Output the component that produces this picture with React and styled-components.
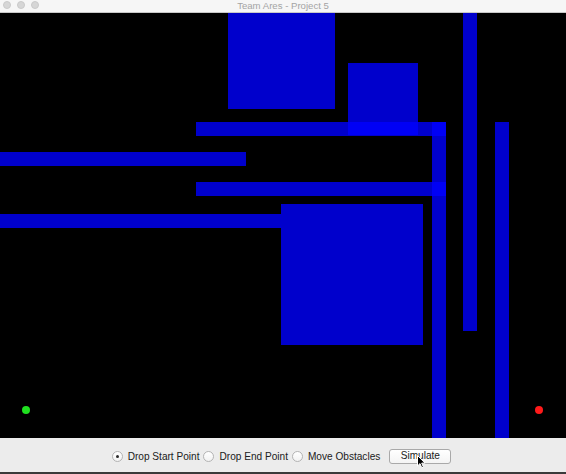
import React from "react";
import styled, { createGlobalStyle } from "styled-components";

const Global = createGlobalStyle`
  html, body { margin: 0; padding: 0; background: #ececec; }
  body { font-family: "Liberation Sans", Arial, sans-serif; }
`;

const Window = styled.div`
  width: 566px;
  height: 474px;
  display: flex;
  flex-direction: column;
  overflow: hidden;
  background: #ececec;
`;

const TitleBar = styled.div`
  position: relative;
  height: 12px;
  flex: none;
  background: #f6f6f6;
  border-bottom: 1px solid #c8c8c8;
  display: flex;
  align-items: center;
  justify-content: center;
`;

const Lights = styled.div`
  position: absolute;
  left: 3px;
  top: 1px;
  display: flex;
  gap: 6px;
`;

const Light = styled.span`
  width: 8px;
  height: 8px;
  border-radius: 50%;
  background: #d6d6d6;
  border: 0.5px solid #cacaca;
  box-sizing: border-box;
`;

const Title = styled.span`
  font-size: 9.6px;
  color: #a4a4a4;
  line-height: 12px;
  margin-top: -1px;
`;

const Canvas = styled.div`
  position: relative;
  height: 425px;
  flex: none;
  background: #000;
  overflow: hidden;
`;

const Obstacle = styled.div`
  position: absolute;
  background: rgba(0, 0, 255, 0.8);
`;

const Dot = styled.div`
  position: absolute;
  width: 8px;
  height: 8px;
  border-radius: 50%;
  background: ${(p) => p.$color};
`;

const Panel = styled.div`
  flex: 1;
  background: #ececec;
  border-bottom: 2px solid #3a3a3a;
  display: flex;
  align-items: center;
  justify-content: center;
  padding-right: 3px;
  padding-top: 2px;
  position: relative;
`;

const Option = styled.label`
  display: flex;
  align-items: center;
  gap: 5px;
  margin-right: 4px;
  font-size: 10.1px;
  color: #202020;
`;

const Radio = styled.span`
  width: 11px;
  height: 11px;
  box-sizing: border-box;
  border-radius: 50%;
  border: 1px solid #b4b4b4;
  background: linear-gradient(#ffffff, #f2f2f2);
  display: flex;
  align-items: center;
  justify-content: center;
  &::after {
    content: "";
    width: 3px;
    height: 3px;
    border-radius: 50%;
    background: ${(p) => (p.$checked ? "#2a2a2a" : "transparent")};
  }
`;

const Button = styled.button`
  margin-left: 5px;
  width: 62px;
  height: 15px;
  padding: 0;
  box-sizing: border-box;
  border: 1px solid #a9a9a9;
  border-radius: 3px;
  background: linear-gradient(#ffffff, #f4f4f4);
  font-family: "Liberation Sans", Arial, sans-serif;
  font-size: 10.1px;
  color: #202020;
  line-height: 12px;
`;

const Cursor = styled.svg`
  position: absolute;
  left: 417px;
  top: 17px;
`;

const obstacles = [
  { x: 228, y: 0, w: 107, h: 96 },
  { x: 348, y: 50, w: 70, h: 72 },
  { x: 196, y: 109, w: 250, h: 14 },
  { x: 0, y: 139, w: 246, h: 14 },
  { x: 196, y: 169, w: 250, h: 14 },
  { x: 0, y: 201, w: 281, h: 14 },
  { x: 281, y: 191, w: 142, h: 141 },
  { x: 432, y: 109, w: 14, h: 316 },
  { x: 463, y: 0, w: 14, h: 318 },
  { x: 495, y: 109, w: 14, h: 316 },
];

export default function App() {
  return (
    <>
      <Global />
      <Window>
        <TitleBar>
          <Lights>
            <Light />
            <Light />
            <Light />
          </Lights>
          <Title>Team Ares - Project 5</Title>
        </TitleBar>
        <Canvas>
          {obstacles.map((o, i) => (
            <Obstacle
              key={i}
              style={{ left: o.x, top: o.y, width: o.w, height: o.h }}
            />
          ))}
          <Dot $color="#1fe01f" style={{ left: 22, top: 393 }} />
          <Dot $color="#ff1a1a" style={{ left: 534.5, top: 393 }} />
        </Canvas>
        <Panel>
          <Option>
            <Radio $checked />
            Drop Start Point
          </Option>
          <Option>
            <Radio />
            Drop End Point
          </Option>
          <Option>
            <Radio />
            Move Obstacles
          </Option>
          <Button>Simulate</Button>
          <Cursor width="9" height="14" viewBox="0 0 9 14">
            <path
              d="M0.5 0.5 L0.5 11 L3 8.6 L4.8 12.8 L6.4 12.1 L4.7 8.1 L8 8.1 Z"
              fill="#000"
              stroke="#fff"
              strokeWidth="1"
              strokeLinejoin="round"
            />
          </Cursor>
        </Panel>
      </Window>
    </>
  );
}
